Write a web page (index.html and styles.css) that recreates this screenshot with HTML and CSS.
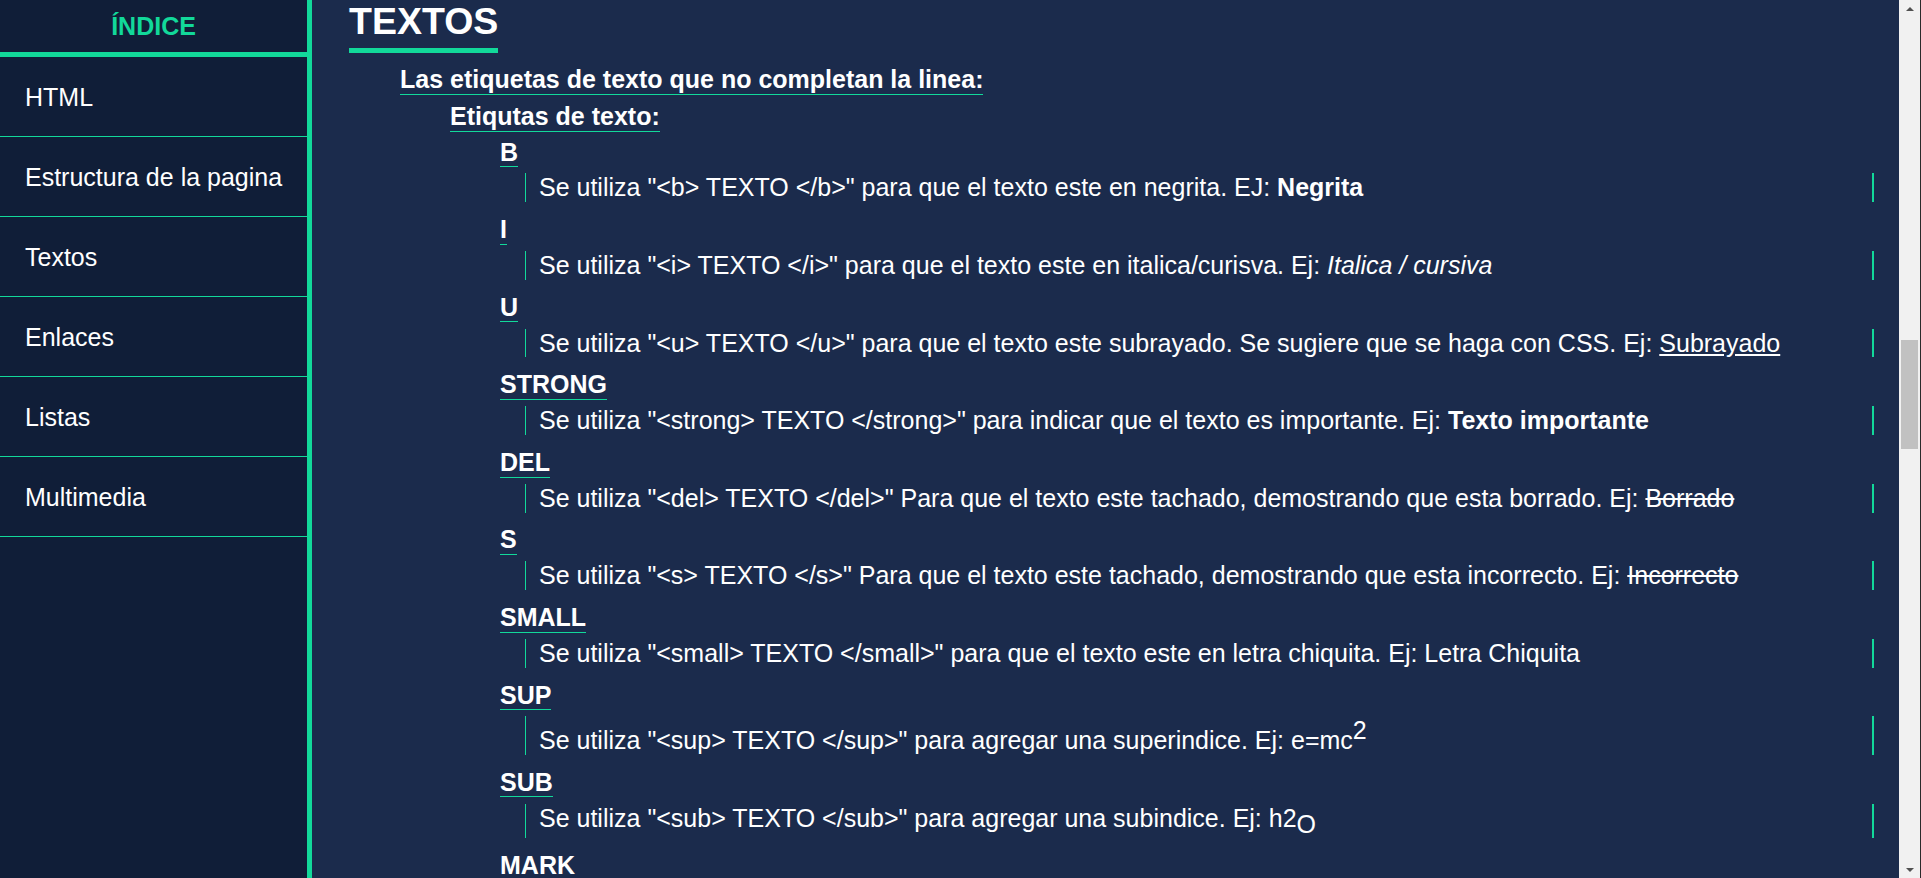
FILE: index.html
```html
<!DOCTYPE html>
<html lang="es">
<head>
<meta charset="utf-8">
<title>Textos</title>
<link rel="stylesheet" href="styles.css">
</head>
<body>
<div class="layout">
  <aside class="sidebar">
    <div class="sidebar-head">ÍNDICE</div>
    <nav class="menu">
      <a class="menu-item" href="#">HTML</a>
      <a class="menu-item" href="#">Estructura de la pagina</a>
      <a class="menu-item" href="#">Textos</a>
      <a class="menu-item" href="#">Enlaces</a>
      <a class="menu-item" href="#">Listas</a>
      <a class="menu-item" href="#">Multimedia</a>
    </nav>
  </aside>
  <main class="content">
    <h1 class="title">TEXTOS</h1>
    <h2 class="section">Las etiquetas de texto que no completan la linea:</h2>
    <h3 class="subsection">Etiqutas de texto:</h3>
    <div class="entries">
      <div class="tag">B</div>
      <p class="desc">Se utiliza "&lt;b&gt; TEXTO &lt;/b&gt;" para que el texto este en negrita. EJ: <b>Negrita</b></p>
      <div class="tag">I</div>
      <p class="desc">Se utiliza "&lt;i&gt; TEXTO &lt;/i&gt;" para que el texto este en italica/curisva. Ej: <i>Italica / cursiva</i></p>
      <div class="tag">U</div>
      <p class="desc">Se utiliza "&lt;u&gt; TEXTO &lt;/u&gt;" para que el texto este subrayado. Se sugiere que se haga con CSS. Ej: <u>Subrayado</u></p>
      <div class="tag">STRONG</div>
      <p class="desc">Se utiliza "&lt;strong&gt; TEXTO &lt;/strong&gt;" para indicar que el texto es importante. Ej: <strong>Texto importante</strong></p>
      <div class="tag">DEL</div>
      <p class="desc">Se utiliza "&lt;del&gt; TEXTO &lt;/del&gt;" Para que el texto este tachado, demostrando que esta borrado. Ej: <del>Borrado</del></p>
      <div class="tag">S</div>
      <p class="desc">Se utiliza "&lt;s&gt; TEXTO &lt;/s&gt;" Para que el texto este tachado, demostrando que esta incorrecto. Ej: <s>Incorrecto</s></p>
      <div class="tag">SMALL</div>
      <p class="desc">Se utiliza "&lt;small&gt; TEXTO &lt;/small&gt;" para que el texto este en letra chiquita. Ej: <small>Letra Chiquita</small></p>
      <div class="tag">SUP</div>
      <p class="desc">Se utiliza "&lt;sup&gt; TEXTO &lt;/sup&gt;" para agregar una superindice. Ej: e=mc<sup>2</sup></p>
      <div class="tag">SUB</div>
      <p class="desc">Se utiliza "&lt;sub&gt; TEXTO &lt;/sub&gt;" para agregar una subindice. Ej: h2<sub>O</sub></p>
      <div class="tag">MARK</div>
      <p class="desc">Se utiliza "&lt;mark&gt; TEXTO &lt;/mark&gt;" para resaltar el texto. Ej: <mark>Resaltado</mark></p>
    </div>
  </main>
  <div class="scrollbar">
    <div class="sb-btn"><span class="arrow-up"></span></div>
    <div class="sb-track"><div class="sb-thumb"></div></div>
    <div class="sb-btn"><span class="arrow-down"></span></div>
  </div>
</div>
</body>
</html>
```
FILE: styles.css
```css
* { box-sizing: border-box; }
html, body {
  margin: 0;
  height: 100%;
  overflow: hidden;
}
body {
  font-family: "Liberation Sans", Arial, sans-serif;
  font-size: 25px;
  color: #ffffff;
  background: #1b2b4c;
}
.layout {
  display: flex;
  height: 878px;
}
.sidebar {
  width: 312px;
  flex: none;
  background: #101e38;
  border-right: 5px solid #12d99a;
  display: flex;
  flex-direction: column;
}
.sidebar-head {
  height: 57px;
  border-bottom: 5px solid #12d99a;
  display: flex;
  align-items: center;
  justify-content: center;
  color: #12d99a;
  font-weight: bold;
  font-size: 25px;
  line-height: 28.75px;
  padding-top: 1px;
}
.menu {
  display: flex;
  flex-direction: column;
}
.menu-item {
  height: 80px;
  border-bottom: 1px solid #12d99a;
  display: flex;
  align-items: center;
  padding: 2px 0 0 25px;
  color: #ffffff;
  text-decoration: none;
  font-size: 25px;
}
.content {
  flex: 1;
  min-width: 0;
  background: #1b2b4c;
  padding: 0 25px 0 37px;
  overflow: hidden;
}
.title {
  width: fit-content;
  margin: 0;
  font-size: 37.5px;
  line-height: 43px;
  padding-bottom: 5px;
  border-bottom: 5px solid #12d99a;
  font-weight: bold;
}
.section, .subsection, .tag {
  width: fit-content;
  font-size: 25px;
  line-height: 28.75px;
  font-weight: bold;
  border-bottom: 1px solid #12d99a;
}
.section {
  margin: 12px 0 0 51px;
}
.subsection {
  margin: 7px 0 0 101px;
}
.entries {
  margin-left: 151px;
  padding-top: 6px;
}
.desc {
  margin: 6.2px 0 12.9px 25px;
  line-height: 28.75px;
  border-left: 1px solid #12d99a;
  border-right: 2px solid #12d99a;
  padding-left: 13px;
}
.desc small {
  font-size: 1em;
}
.desc sup {
  font-size: 1em;
  vertical-align: 9.6px;
  line-height: 28.75px;
}
.desc sub {
  font-size: 1em;
  vertical-align: -5.6px;
  line-height: 28.75px;
}
.desc mark {
  background: yellow;
  color: #000;
}
.scrollbar {
  width: 22px;
  flex: none;
  background: #f1f1f1;
  display: flex;
  flex-direction: column;
  border-right: 1px solid #2a2a2a;
}
.sb-btn {
  height: 17px;
  display: flex;
  align-items: center;
  justify-content: center;
}
.arrow-up {
  width: 0;
  height: 0;
  border-left: 4px solid transparent;
  border-right: 4px solid transparent;
  border-bottom: 4px solid #505050;
}
.arrow-down {
  width: 0;
  height: 0;
  border-left: 4px solid transparent;
  border-right: 4px solid transparent;
  border-top: 4px solid #505050;
}
.sb-track {
  flex: 1;
}
.sb-thumb {
  margin: 323px 2px 0 2px;
  height: 109px;
  background: #c1c1c1;
}
```
